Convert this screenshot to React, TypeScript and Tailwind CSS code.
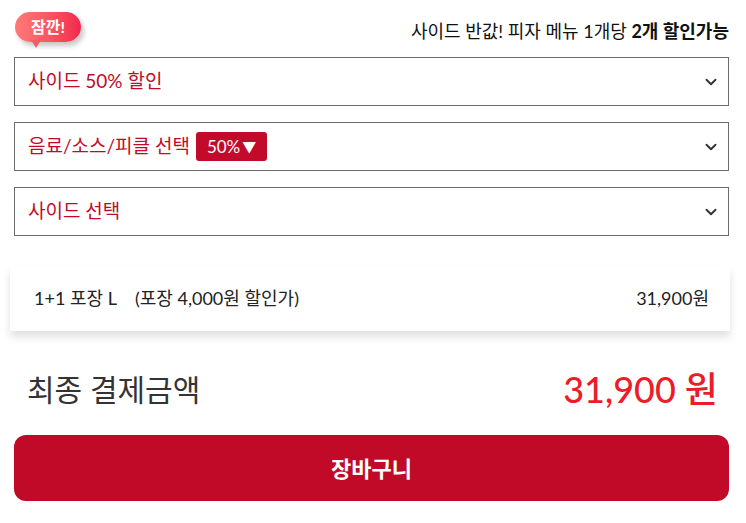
import { ChevronDown } from "lucide-react";

const font = "font-['Lato','Noto_Sans_CJK_KR',sans-serif]";

const SelectBox = ({ children }: { children: React.ReactNode }) => (
  <div className="flex h-[49px] items-center justify-between border border-[#6b6b6b] bg-white pl-[13px] pr-[8px]">
    <div className="flex items-center gap-[6px] text-[19px] text-[#c00a28]">{children}</div>
    <ChevronDown className="h-[18px] w-[18px] text-[#333]" strokeWidth={2.5} />
  </div>
);

export default function App() {
  return (
    <div className={`${font} w-[746px] h-[523px] bg-white pl-[14px] pr-[17px]`}>
      {/* top row */}
      <div className="flex h-[57px] items-start justify-between pt-[12px]">
        <div className="relative ml-[1px]">
          <div className="flex h-[30px] w-[66px] items-center justify-center rounded-[15px] bg-gradient-to-r from-[#ff7a78] to-[#f2254d] text-[16px] font-bold text-white shadow-[3px_4px_5px_rgba(0,0,0,0.22)]">
            잠깐!
          </div>
          <div className="absolute left-[16px] top-[28px] h-0 w-0 border-l-[5px] border-r-[5px] border-t-[8px] border-l-transparent border-r-transparent border-t-[#fb5a66]" />
        </div>
        <div className="pt-[6px] text-[18px] text-[#111]">
          사이드 반값! 피자 메뉴 1개당 <span className="font-bold">2개 할인가능</span>
        </div>
      </div>

      <div className="flex flex-col gap-[16px]">
        <SelectBox>사이드 50% 할인</SelectBox>
        <SelectBox>
          <span>음료/소스/피클 선택</span>
          <span className="flex h-[29px] items-center rounded-[3px] bg-[#c20a2b] px-[11px] text-[17px] text-white">
            50%<span className="ml-[2px] text-[14px]">▼</span>
          </span>
        </SelectBox>
        <SelectBox>사이드 선택</SelectBox>
      </div>

      {/* item card */}
      <div className="-ml-[4px] -mr-[1px] mt-[30px] flex h-[65px] items-center justify-between bg-white pl-[24px] pr-[21px] text-[18px] text-[#222] shadow-[0_6px_8px_rgba(0,0,0,0.12)]">
        <div className="flex gap-[18px]">
          <span>1+1 포장 L</span>
          <span>(포장 4,000원 할인가)</span>
        </div>
        <span>31,900원</span>
      </div>

      {/* total */}
      <div className="mt-[31px] flex items-center justify-between pl-[13px] pr-[11px]">
        <span className="text-[30px] text-[#333]">최종 결제금액</span>
        <span className="text-[36px] font-medium text-[#ec1c2a]">31,900 원</span>
      </div>

      <button className="mt-[19px] flex h-[66px] w-full items-center justify-center rounded-[12px] bg-[#c00a28] text-[22px] font-bold text-white">
        장바구니
      </button>
    </div>
  );
}
